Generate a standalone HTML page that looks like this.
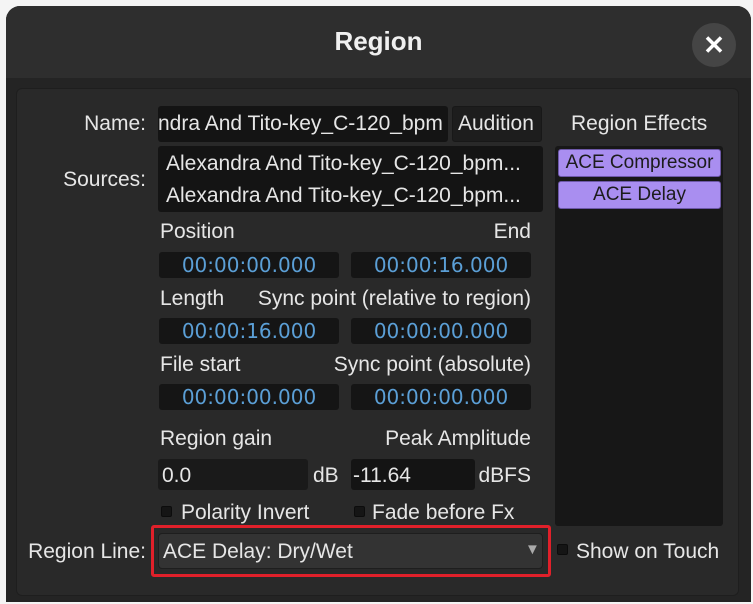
<!DOCTYPE html><html><head><style>
*{margin:0;padding:0;box-sizing:border-box}
body{width:753px;height:604px;background:#f4f4f4;font-family:"Liberation Sans",sans-serif;color:#e6e6e6;font-size:21px;position:relative;overflow:hidden}
.win{position:absolute;left:6px;top:6px;width:745px;height:596px;background:#242424;border-radius:14px 14px 0 0;overflow:hidden}
.hdr{position:absolute;left:0;top:0;width:745px;height:72px;background:#2e2e2e}
.t{position:absolute;white-space:nowrap;line-height:24px}
.r{position:absolute;white-space:nowrap;line-height:24px;text-align:right}
.f{position:absolute;background:#141414;border-radius:3px}
.tc{position:absolute;background:#151515;border-radius:3px;color:#5b9fd6;font-family:"DejaVu Sans",sans-serif;font-size:20px;text-align:center;line-height:26px;height:26px;width:180px}
.cb{position:absolute;width:11px;height:11px;background:#151515;border:1px solid #0c0c0c;border-radius:2px}
.fx{position:absolute;left:558px;width:163px;height:28px;background:#a98ef0;border:1px solid #6d58a8;border-radius:3px;color:#1c1c1c;text-align:center;line-height:26px;font-size:19px}
</style></head><body>
<div class="win">
<div class="hdr"></div>
<div class="t" style="left:0;width:745px;text-align:center;top:23px;font-size:26px;font-weight:bold;color:#f0f0f0">Region</div>
<div style="position:absolute;left:686px;top:17px;width:44px;height:44px;border-radius:50%;background:#454545;color:#fff;font-weight:bold;font-size:26px;text-align:center;line-height:44px">✕</div>
<div style="position:absolute;left:10px;top:82px;width:723px;height:508px;background:#292929;border:1px solid #1e1e1e;border-radius:6px"></div>
</div>
<div class="r" style="right:607px;top:112px">Name:</div>
<div class="f" style="left:158px;top:106px;width:290px;height:36px;overflow:hidden"><div class="t" style="left:0;top:6px">ndra And Tito-key_C-120_bpm</div></div>
<div class="f" style="left:452px;top:106px;width:90px;height:36px;background:#1d1d1d;border:1px solid #181818"><div class="t" style="left:5px;top:5px">Audition</div></div>
<div class="t" style="left:571px;top:112px">Region Effects</div>
<div class="r" style="right:607px;top:168px">Sources:</div>
<div class="f" style="left:158px;top:146px;width:385px;height:66px"></div>
<div class="t" style="left:166px;top:152px">Alexandra And Tito-key_C-120_bpm...</div>
<div class="t" style="left:166px;top:184px">Alexandra And Tito-key_C-120_bpm...</div>
<div class="f" style="left:555px;top:146px;width:168px;height:380px;background:#171717"></div>
<div class="fx" style="top:149px">ACE Compressor</div>
<div class="fx" style="top:181px">ACE Delay</div>
<div class="t" style="left:160px;top:220px">Position</div><div class="r" style="right:222px;top:220px">End</div>
<div class="tc" style="left:159px;top:252px">00:00:00.000</div><div class="tc" style="left:351px;top:252px">00:00:16.000</div>
<div class="t" style="left:160px;top:287px">Length</div><div class="r" style="right:222px;top:287px">Sync point (relative to region)</div>
<div class="tc" style="left:159px;top:318px">00:00:16.000</div><div class="tc" style="left:351px;top:318px">00:00:00.000</div>
<div class="t" style="left:160px;top:353px">File start</div><div class="r" style="right:222px;top:353px">Sync point (absolute)</div>
<div class="tc" style="left:159px;top:384px">00:00:00.000</div><div class="tc" style="left:351px;top:384px">00:00:00.000</div>
<div class="t" style="left:160px;top:427px">Region gain</div><div class="r" style="right:222px;top:427px">Peak Amplitude</div>
<div class="f" style="left:158px;top:459px;width:150px;height:31px;background:#1a1a1a"></div>
<div class="t" style="left:162px;top:464px">0.0</div>
<div class="t" style="left:313px;top:464px">dB</div>
<div class="f" style="left:351px;top:459px;width:124px;height:31px;background:#141414"></div>
<div class="t" style="left:353px;top:464px">-11.64</div>
<div class="r" style="right:222px;top:464px">dBFS</div>
<div class="cb" style="left:161px;top:506px"></div><div class="t" style="left:181px;top:501px">Polarity Invert</div>
<div class="cb" style="left:354px;top:506px"></div><div class="t" style="left:372px;top:501px">Fade before Fx</div>
<div class="r" style="right:607px;top:540px">Region Line:</div>
<div style="position:absolute;left:151px;top:525px;width:400px;height:52px;border:3px solid #e0202a;border-radius:3px"></div>
<div style="position:absolute;left:158px;top:533px;width:385px;height:36px;background:#333;border:1px solid #1e1e1e;border-radius:4px"></div>
<div class="t" style="left:163px;top:540px">ACE Delay: Dry/Wet</div>
<div class="t" style="left:525px;top:538px;font-size:15px;color:#aaa">▼</div>
<div class="cb" style="left:557px;top:544px"></div><div class="t" style="left:576px;top:540px">Show on Touch</div>
</body></html>
